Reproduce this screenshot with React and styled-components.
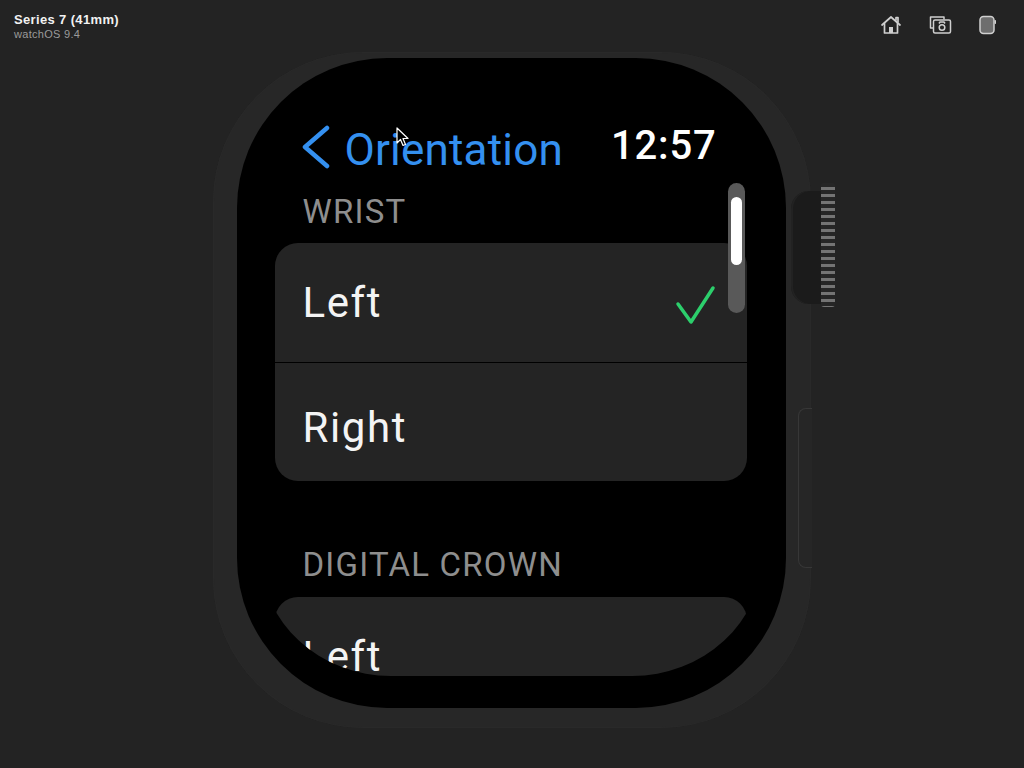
import React from 'react';
import styled, { createGlobalStyle } from 'styled-components';

const GlobalStyle = createGlobalStyle`
	html, body {
		margin: 0;
		padding: 0;
		background: #232323;
	}
	* {
		box-sizing: border-box;
	}
`;

const Page = styled.div`
	display: flex;
	flex-direction: column;
	width: 1024px;
	height: 768px;
	background: #232323;
	overflow: hidden;
	font-family: 'Liberation Sans', Arial, sans-serif;
`;

const TopBar = styled.div`
	display: flex;
	flex-direction: row;
	justify-content: space-between;
	align-items: flex-start;
	height: 52px;
	padding: 12px 27px 0 14px;
`;

const DeviceInfo = styled.div`
	display: flex;
	flex-direction: column;
`;

const DeviceName = styled.div`
	font-size: 13px;
	line-height: 15px;
	font-weight: bold;
	color: #f2f2f2;
	letter-spacing: 0.35px;
`;

const DeviceOs = styled.div`
	font-size: 11px;
	line-height: 13px;
	margin-top: 1px;
	color: #9a9a9a;
	letter-spacing: 0.3px;
`;

const ToolIcons = styled.div`
	display: flex;
	flex-direction: row;
	align-items: center;
	gap: 27px;
	margin-top: 3px;
`;

const Stage = styled.div`
	display: flex;
	justify-content: center;
	padding-right: 1px;
`;

const WatchBody = styled.div`
	position: relative;
	width: 598px;
	height: 676px;
	padding: 6px 25px 20px 24px;
	border-radius: 150px;
	background: #272727;
	box-shadow: inset 0 0 0 1px #292929;
`;

const Crown = styled.div`
	position: absolute;
	left: 578px;
	top: 139px;
	width: 32px;
	height: 113px;
	border-radius: 18px 4px 4px 18px;
	background: #1b1b1b;
	box-shadow: inset 2px 0 0 #222;
`;

const CrownRidges = styled.div`
	position: absolute;
	left: 608px;
	top: 131px;
	width: 14px;
	height: 124px;
	border-radius: 3px;
	background: repeating-linear-gradient(
		180deg,
		#262626 0px,
		#262626 4px,
		#747474 4px,
		#747474 7px
	);
`;

const SideButton = styled.div`
	position: absolute;
	left: 585px;
	top: 356px;
	width: 14px;
	height: 160px;
	border-radius: 8px 0 0 8px;
	border: 1px solid #373737;
	border-right: none;
	background: #262626;
`;

const Screen = styled.div`
	width: 549px;
	height: 650px;
	padding: 0 24px 32px 24px;
	border-radius: 150px;
	background: #000;
`;

const Display = styled.div`
	position: relative;
	width: 501px;
	height: 618px;
	padding: 66px 15px 0 14px;
	border-radius: 121px 121px 130px 130px / 121px 121px 120px 120px;
	overflow: hidden;
	font-family: Roboto, 'Noto Sans', sans-serif;
`;

const NavRow = styled.div`
	display: flex;
	flex-direction: row;
	justify-content: space-between;
	align-items: flex-start;
	height: 52px;
	padding: 0 30px 0 27px;
`;

const BackButton = styled.div`
	display: flex;
	flex-direction: row;
	align-items: flex-start;
	gap: 15px;
`;

const NavTitle = styled.div`
	font-size: 44px;
	line-height: 52px;
	color: #3490f0;
	letter-spacing: 0.2px;
`;

const Clock = styled.div`
	font-size: 40px;
	line-height: 44px;
	font-weight: 500;
	color: #fff;
	letter-spacing: 0.8px;
`;

const SectionHeader = styled.div`
	margin-top: ${(p) => p.$gap}px;
	padding-left: 28px;
	font-size: 33px;
	line-height: 40px;
	color: #8e8e8e;
	letter-spacing: 1.2px;
`;

const Card = styled.div`
	display: flex;
	flex-direction: column;
	margin-top: ${(p) => p.$gap}px;
	border-radius: 23px;
	background: #242424;
	overflow: hidden;
`;

const Row = styled.div`
	display: flex;
	flex-direction: row;
	justify-content: space-between;
	align-items: center;
	height: 119px;
	padding: ${(p) => p.$shift}px 30px 0 28px;
	border-top: ${(p) => (p.$first ? 'none' : '1.5px solid #000')};
`;

const RowLabel = styled.div`
	font-size: 42px;
	line-height: 48px;
	color: #f4f4f4;
	letter-spacing: 1.6px;
`;

const ScrollTrack = styled.div`
	position: absolute;
	left: 467px;
	top: 125px;
	width: 17px;
	height: 130px;
	border-radius: 9px;
	background: #595959;
	padding: 14px 3px 0 3px;
`;

const ScrollThumb = styled.div`
	width: 11px;
	height: 68px;
	border-radius: 6px;
	background: #fff;
`;

const Cursor = styled.svg`
	position: absolute;
	left: 135px;
	top: 69px;
`;

const HomeIcon = () => (
	<svg width="22" height="20" viewBox="0 0 22 20" fill="none" stroke="#cfcfcf" strokeWidth="1.7" strokeLinejoin="round" strokeLinecap="round">
		<path d="M2 10 L11 2 L20 10" />
		<path d="M16 5 L16 2.5 L18 2.5 L18 7" />
		<path d="M4.5 8.5 L4.5 18 L17.5 18 L17.5 8.5" />
		<rect x="9" y="12" width="4" height="6" fill="#cfcfcf" stroke="none" />
	</svg>
);

const ScreenshotIcon = () => (
	<svg width="23" height="20" viewBox="0 0 23 20" fill="none" stroke="#cfcfcf" strokeWidth="1.5" strokeLinejoin="round">
		<path d="M4 13 L1.5 13 L1.5 2 L15 2 L15 4.5" />
		<rect x="4.5" y="5" width="17" height="13" rx="1.5" />
		<path d="M10 8.5 L11 7 L15 7 L16 8.5" />
		<circle cx="13" cy="12.5" r="2.8" />
	</svg>
);

const DeviceIcon = () => (
	<svg width="18" height="20" viewBox="0 0 18 20">
		<rect x="1" y="1.5" width="14" height="17" rx="3.5" fill="#6e6e6e" stroke="#d0d0d0" strokeWidth="1.5" />
		<rect x="15.5" y="5" width="1.5" height="4" rx="0.7" fill="#d0d0d0" />
	</svg>
);

const Chevron = () => (
	<svg width="28" height="44" viewBox="0 0 28 44" fill="none" style={{ marginTop: 1 }}>
		<path d="M25 3 L3 22 L25 41" stroke="#3490f0" strokeWidth="4.5" strokeLinecap="round" strokeLinejoin="round" />
	</svg>
);

const Check = () => (
	<svg width="42" height="40" viewBox="0 0 42 40" fill="none" style={{ marginTop: 5 }}>
		<path d="M3 19 L16 37 L38 3" stroke="#2ccf6c" strokeWidth="3.5" strokeLinecap="round" strokeLinejoin="round" />
	</svg>
);

const App = () => {
	return (
		<Page>
			<GlobalStyle />
			<TopBar>
				<DeviceInfo>
					<DeviceName>Series 7 (41mm)</DeviceName>
					<DeviceOs>watchOS 9.4</DeviceOs>
				</DeviceInfo>
				<ToolIcons>
					<HomeIcon />
					<ScreenshotIcon />
					<DeviceIcon />
				</ToolIcons>
			</TopBar>
			<Stage>
				<WatchBody>
					<SideButton />
					<Crown />
					<CrownRidges />
					<Screen>
						<Display>
							<NavRow>
								<BackButton>
									<Chevron />
									<NavTitle>Orientation</NavTitle>
								</BackButton>
								<Clock>12:57</Clock>
							</NavRow>
							<SectionHeader $gap={16}>WRIST</SectionHeader>
							<Card $gap={11}>
								<Row $first $shift={0}>
									<RowLabel>Left</RowLabel>
									<Check />
								</Row>
								<Row $shift={12}>
									<RowLabel>Right</RowLabel>
								</Row>
							</Card>
							<SectionHeader $gap={64}>DIGITAL CROWN</SectionHeader>
							<Card $gap={12}>
								<Row $first $shift={0}>
									<RowLabel>Left</RowLabel>
								</Row>
							</Card>
							<ScrollTrack>
								<ScrollThumb />
							</ScrollTrack>
							<Cursor width="14" height="20" viewBox="0 0 14 20">
								<path d="M1 1 L1 16 L4.5 12.5 L7 18.5 L9.5 17.5 L7 11.5 L12 11.5 Z" fill="#000" stroke="#fff" strokeWidth="1.2" strokeLinejoin="round" />
							</Cursor>
						</Display>
					</Screen>
				</WatchBody>
			</Stage>
		</Page>
	);
};

export default App;
